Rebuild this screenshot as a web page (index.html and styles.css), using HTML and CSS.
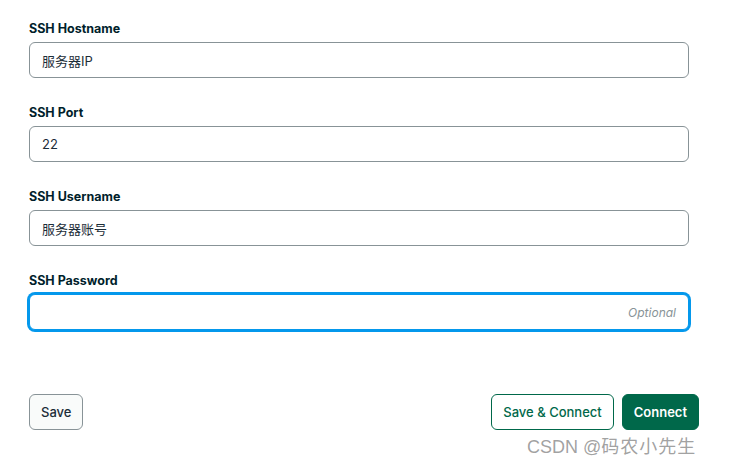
FILE: index.html
```html
<!DOCTYPE html>
<html>
<head>
<meta charset="utf-8">
<link rel="stylesheet" href="styles.css">
</head>
<body>
<div class="form">
  <div class="field">
    <label class="label">SSH Hostname</label>
    <div class="input">服务器IP</div>
  </div>
  <div class="field">
    <label class="label">SSH Port</label>
    <div class="input">22</div>
  </div>
  <div class="field">
    <label class="label">SSH Username</label>
    <div class="input">服务器账号</div>
  </div>
  <div class="field">
    <label class="label">SSH Password</label>
    <div class="input focused"><span class="placeholder">Optional</span></div>
  </div>
  <div class="actions">
    <button class="btn btn-default">Save</button>
    <div class="spacer"></div>
    <button class="btn btn-outline">Save &amp; Connect</button>
    <button class="btn btn-primary">Connect</button>
  </div>
</div>
<div class="watermark">CSDN @<span class="wm-cjk">码农小先生</span></div>
</body>
</html>
```
FILE: styles.css
```css
html, body {
  margin: 0;
  padding: 0;
  background: #ffffff;
}
body {
  font-family: Inter, "Noto Sans", "Noto Sans CJK SC", sans-serif;
  color: #001e2b;
  width: 732px;
  height: 463px;
  overflow: hidden;
  position: relative;
}
.form {
  padding: 18px 0 0 29px;
  width: 670px;
}
.field {
  display: flex;
  flex-direction: column;
  width: 660px;
  margin-bottom: 24px;
}
.label {
  font-size: 12.5px;
  font-weight: 700;
  line-height: 21px;
  margin-bottom: 3px;
  color: #001e2b;
}
.input {
  box-sizing: border-box;
  height: 36px;
  border: 1px solid #889397;
  border-radius: 6px;
  padding: 0 12px;
  display: flex;
  align-items: center;
  font-family: Inter, "Noto Sans CJK SC", sans-serif;
  font-size: 13px;
  color: #1c2d38;
  background: #fff;
}
.input.focused {
  border-color: #0498ec;
  box-shadow: 0 0 0 2px #0498ec;
  justify-content: flex-end;
}
.placeholder {
  font-style: italic;
  color: #889397;
  font-size: 12px;
}
.actions {
  display: flex;
  align-items: center;
  gap: 8px;
  margin-top: 64px;
}
.spacer { flex: 1; }
.btn {
  box-sizing: border-box;
  height: 36px;
  border-radius: 6px;
  font-family: Inter, sans-serif;
  font-size: 13px;
  font-weight: 500;
  padding: 0 11px;
  cursor: pointer;
}
.btn-default {
  background: #f9fbfa;
  border: 1px solid #889397;
  color: #1c2d38;
}
.btn-outline {
  background: #fff;
  border: 1px solid #00684a;
  color: #00684a;
}
.btn-primary {
  background: #00684a;
  border: 1px solid #00684a;
  color: #fff;
  font-weight: 600;
}
.watermark {
  position: absolute;
  left: 527px;
  top: 432px;
  font-family: "Liberation Sans", "Noto Sans CJK SC", sans-serif;
  font-size: 18px;
  color: rgba(120, 120, 120, 0.7);
  white-space: nowrap;
}
.wm-cjk {
  letter-spacing: 1px;
}
```
